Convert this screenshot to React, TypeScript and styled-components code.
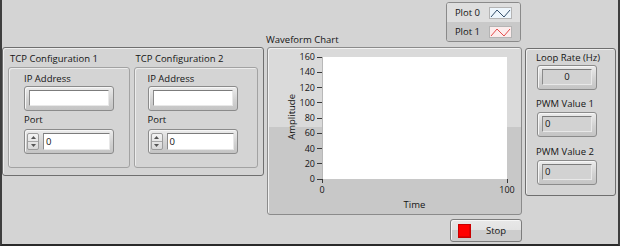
import React from "react";
import styled, { createGlobalStyle } from "styled-components";

const Global = createGlobalStyle`
  html, body { margin: 0; padding: 0; }
  body {
    background: #d4d4d4;
    font-family: "Open Sans", "Noto Sans", sans-serif;
    font-size: 9.5px;
    color: #141414;
  }
  * { box-sizing: border-box; }
`;

const Frame = styled.div`
  width: 620px;
  height: 246px;
  border-left: 2px solid #3e3e3e;
  border-right: 2px solid #3e3e3e;
  border-bottom: 2px solid #2a2a2a;
  background: #d4d4d4;
  display: flex;
  align-items: flex-start;
`;

const OuterBox = styled.div`
  margin-top: 47px;
  width: 262px;
  height: 129px;
  border: 1px solid #6f6f6f;
  border-radius: 3px;
  box-shadow: inset 1px 1px 0 #eeeeee;
  display: flex;
  gap: 4px;
  padding: 4px 5px 0 5px;
`;

const ClusterCol = styled.div<{ $w: number }>`
  width: ${(p) => p.$w}px;
  display: flex;
  flex-direction: column;
`;

const Caption = styled.div<{ $ml?: number; $mt?: number }>`
  height: 13px;
  line-height: 13px;
  white-space: nowrap;
  margin-left: ${(p) => p.$ml ?? 0}px;
  margin-top: ${(p) => p.$mt ?? 0}px;
`;

const InnerBox = styled.div<{ $pl: number }>`
  margin-top: 2px;
  height: 101px;
  border: 1px solid #a2a2a2;
  border-radius: 3px;
  box-shadow: inset 1px 1px 0 #ececec;
  padding: 4px 0 0 ${(p) => p.$pl}px;
  display: flex;
  flex-direction: column;
  align-items: flex-start;
`;

const RaisedFrame = styled.div<{ $w: number; $mt?: number; $ml?: number }>`
  width: ${(p) => p.$w}px;
  height: 25px;
  margin-top: ${(p) => p.$mt ?? 0}px;
  margin-left: ${(p) => p.$ml ?? 0}px;
  border: 1px solid #8b8b8b;
  border-radius: 3px;
  background: linear-gradient(to bottom, #ececec 0%, #d2d2d2 55%, #c4c4c4 100%);
  box-shadow: inset 1px 1px 0 #f6f6f6;
  padding: 3px 4px 4px 4px;
  display: flex;
  gap: 4px;
`;

const PortFrame = styled(RaisedFrame)`
  padding: 3px 3px 3px 2px;
`;

const Entry = styled.div<{ $bg: string; $align?: string }>`
  flex: 1;
  background: ${(p) => p.$bg};
  border-top: 1px solid #7c7c7c;
  border-left: 1px solid #8a8a8a;
  border-right: 1px solid #e8e8e8;
  border-bottom: 1px solid #e8e8e8;
  display: flex;
  align-items: center;
  justify-content: ${(p) => p.$align ?? "flex-start"};
  padding-left: ${(p) => (p.$align === "center" ? 0 : 2)}px;
  line-height: 12px;
`;

const Spinner = styled.div`
  width: 12px;
  border: 1px solid #9c9c9c;
  border-radius: 2px;
  background: linear-gradient(to bottom, #f4f4f4, #d8d8d8);
  display: flex;
  flex-direction: column;
`;

const SpinHalf = styled.div<{ $top?: boolean }>`
  flex: 1;
  display: flex;
  align-items: center;
  justify-content: center;
  border-bottom: ${(p) => (p.$top ? "1px solid #a8a8a8" : "none")};
`;

const Arrow = ({ up }: { up?: boolean }) => (
  <svg width="5" height="3" viewBox="0 0 5 3">
    <polygon points={up ? "0,3 5,3 2.5,0" : "0,0 5,0 2.5,3"} fill="#555" />
  </svg>
);

/* ---------- chart column ---------- */

const ChartCol = styled.div`
  margin-left: 2px;
  width: 256px;
  display: flex;
  flex-direction: column;
`;

const ChartHeader = styled.div`
  height: 47px;
  display: flex;
  justify-content: space-between;
  align-items: flex-end;
`;

const ChartTitle = styled.div`
  line-height: 13px;
  margin-bottom: 1px;
  white-space: nowrap;
`;

const Legend = styled.div`
  align-self: flex-start;
  margin-top: 2px;
  margin-right: 1px;
  width: 75px;
  height: 40px;
  border: 1px solid #8a8a8a;
  border-radius: 3px;
  overflow: hidden;
  box-shadow: inset 1px 1px 0 #f0f0f0;
  display: flex;
  flex-direction: column;
`;

const LegendRow = styled.div<{ $bg: string }>`
  flex: 1;
  background: ${(p) => p.$bg};
  display: flex;
  align-items: center;
  justify-content: flex-end;
  gap: 9px;
  padding-right: 8px;
`;

const Swatch = ({ bg, line }: { bg: string; line: string }) => (
  <svg width="23" height="12" viewBox="0 0 23 12">
    <rect x="0.5" y="0.5" width="22" height="11" fill={bg} stroke="#b4b4b4" />
    <polyline points="2,10 8,3 15,10 21,3" fill="none" stroke={line} strokeWidth="1" />
  </svg>
);

const ChartPanel = styled.div`
  margin-left: 1px;
  width: 255px;
  height: 168px;
  border: 1px solid #8b8b8b;
  border-radius: 3px;
  background: linear-gradient(
    to bottom,
    #dadada 0%,
    #dadada 47.5%,
    #c8c8c8 47.5%,
    #c8c8c8 100%
  );
  box-shadow: inset 1px 1px 0 #f2f2f2;
  padding-top: 9px;
  display: grid;
  grid-template-columns: 30px 24px 185px;
  grid-template-rows: 122px 18px 15px;
`;

const AmpLabel = styled.div`
  grid-column: 1;
  grid-row: 1;
  writing-mode: vertical-rl;
  transform: rotate(180deg);
  align-self: center;
  justify-self: end;
  line-height: 12px;
  margin-bottom: 3px;
`;

const YTicks = styled.div`
  grid-column: 2;
  grid-row: 1;
  margin: -6px 0;
  display: flex;
  flex-direction: column;
  justify-content: space-between;
`;

const YTick = styled.div`
  height: 12px;
  display: flex;
  align-items: center;
  justify-content: flex-end;
  gap: 2px;
  font-size: 9px;
  line-height: 12px;
`;

const HMark = styled.span`
  width: 5px;
  height: 1px;
  background: #3a3a3a;
`;

const Plot = styled.div`
  grid-column: 3;
  grid-row: 1;
  background: #ffffff;
  border-left: 1px solid #b8b8b8;
`;

const XAxis = styled.div`
  grid-column: 3;
  grid-row: 2;
  margin: 0 -10px;
  display: flex;
  justify-content: space-between;
  align-items: flex-start;
`;

const XTick = styled.div`
  width: 20px;
  display: flex;
  flex-direction: column;
  align-items: center;
  font-size: 9px;
  line-height: 11px;
`;

const VMark = styled.span`
  width: 1px;
  height: 4px;
  margin-bottom: 1px;
  background: #3a3a3a;
`;

const TimeLabel = styled.div`
  grid-column: 3;
  grid-row: 3;
  text-align: center;
  line-height: 15px;
`;

const StopButton = styled.div`
  margin-top: 4px;
  align-self: flex-end;
  width: 72px;
  height: 23px;
  border: 1px solid #7c7c7c;
  border-radius: 3px;
  background: linear-gradient(
    to bottom,
    #e8e8e8 0%,
    #e2e2e2 50%,
    #cdcdcd 50%,
    #cdcdcd 100%
  );
  box-shadow: inset 1px 1px 0 #f6f6f6;
  display: flex;
  align-items: center;
  padding-left: 7px;
`;

const RedLamp = styled.span`
  width: 13px;
  height: 14px;
  background: #ff0000;
  border: 1px solid #c80000;
  box-shadow: inset -1px -1px 0 #e00000;
`;

const StopText = styled.span`
  flex: 1;
  text-align: center;
  line-height: 13px;
`;

/* ---------- right column ---------- */

const RightPanel = styled.div`
  margin-left: 3px;
  margin-top: 48px;
  width: 91px;
  height: 148px;
  border: 1px solid #6f6f6f;
  border-radius: 3px;
  box-shadow: inset 1px 1px 0 #eeeeee;
  padding: 2px 0 0 10px;
  display: flex;
  flex-direction: column;
  align-items: flex-start;
`;

const Numeric = ({ w, ml, mt }: { w: number; ml?: number; mt?: number }) => (
  <PortFrame $w={w} $ml={ml} $mt={mt}>
    <Spinner>
      <SpinHalf $top>
        <Arrow up />
      </SpinHalf>
      <SpinHalf>
        <Arrow />
      </SpinHalf>
    </Spinner>
    <Entry $bg="#ffffff">0</Entry>
  </PortFrame>
);

const TcpCluster = ({ title, w, pl }: { title: string; w: number; pl: number }) => (
  <ClusterCol $w={w}>
    <Caption $ml={2}>{title}</Caption>
    <InnerBox $pl={pl}>
      <Caption>IP Address</Caption>
      <RaisedFrame $w={90} $mt={1}>
        <Entry $bg="#ffffff" />
      </RaisedFrame>
      <Caption $mt={2}>Port</Caption>
      <Numeric w={90} mt={3} />
    </InnerBox>
  </ClusterCol>
);

const yTicks = [160, 140, 120, 100, 80, 60, 40, 20, 0];

export default function App() {
  return (
    <>
      <Global />
      <Frame>
        <OuterBox>
          <TcpCluster title="TCP Configuration 1" w={122} pl={15} />
          <TcpCluster title="TCP Configuration 2" w={125} pl={13} />
        </OuterBox>

        <ChartCol>
          <ChartHeader>
            <ChartTitle>Waveform Chart</ChartTitle>
            <Legend>
              <LegendRow $bg="#dedede">
                <span>Plot 0</span>
                <Swatch bg="#eef6fc" line="#34506c" />
              </LegendRow>
              <LegendRow $bg="#c9c9c9">
                <span>Plot 1</span>
                <Swatch bg="#fcecec" line="#e44c4c" />
              </LegendRow>
            </Legend>
          </ChartHeader>
          <ChartPanel>
            <AmpLabel>Amplitude</AmpLabel>
            <YTicks>
              {yTicks.map((t) => (
                <YTick key={t}>
                  <span>{t}</span>
                  <HMark />
                </YTick>
              ))}
            </YTicks>
            <Plot />
            <XAxis>
              <XTick>
                <VMark />
                <span>0</span>
              </XTick>
              <XTick>
                <VMark />
                <span>100</span>
              </XTick>
            </XAxis>
            <TimeLabel>Time</TimeLabel>
          </ChartPanel>
          <StopButton>
            <RedLamp />
            <StopText>Stop</StopText>
          </StopButton>
        </ChartCol>

        <RightPanel>
          <Caption>Loop Rate (Hz)</Caption>
          <RaisedFrame $w={60} $ml={1} $mt={1}>
            <Entry $bg="#d2d2d2" $align="center">0</Entry>
          </RaisedFrame>
          <Caption $mt={7}>PWM Value 1</Caption>
          <RaisedFrame $w={60} $ml={1} $mt={2}>
            <Entry $bg="#d2d2d2">0</Entry>
          </RaisedFrame>
          <Caption $mt={8}>PWM Value 2</Caption>
          <RaisedFrame $w={60} $ml={1} $mt={2}>
            <Entry $bg="#d2d2d2">0</Entry>
          </RaisedFrame>
        </RightPanel>
      </Frame>
    </>
  );
}
